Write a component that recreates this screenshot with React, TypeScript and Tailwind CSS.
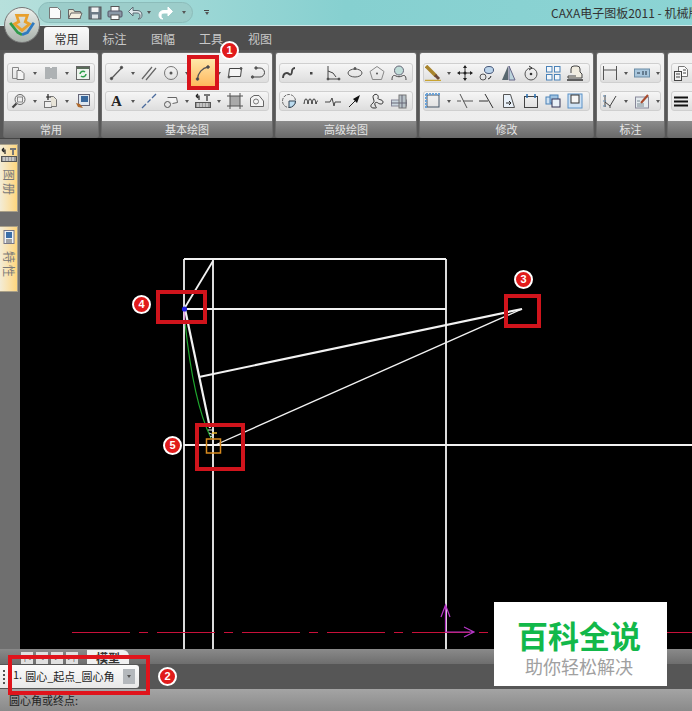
import type { ReactNode } from 'react';

const cjk = 'font-["Noto_Sans_CJK_SC",_"Noto_Sans",_sans-serif]';

function Ic({ children, w = 16 }: { children: ReactNode; w?: number }) {
  return (
    <svg width={w} height={16} viewBox={`0 0 ${w} 16`} fill="none" stroke="#555" strokeWidth="1" className="shrink-0">
      {children}
    </svg>
  );
}

function Caret() {
  return <span className="w-0 h-0 shrink-0 border-x-[2px] border-x-transparent border-t-[3px] border-t-[#555]" />;
}

// 工具栏图标
const icons: Record<string, ReactNode> = {
  copy: <><path d="M1.5 2.5h6v11h-6z" stroke="#888" /><path d="M6 5.5h4l3 3v6H6z" fill="#f4f4f4" stroke="#777" /></>,
  block: <path d="M2 2h5v1h2V2h5v12H9v-1H7v1H2z" fill="#aeb2b4" stroke="none" />,
  refresh: <><rect x="1.5" y="1.5" width="13" height="13" fill="#eef4ee" stroke="#666" /><rect x="2" y="2" width="12" height="2" fill="#5b6d5b" stroke="none" /><path d="M5 9a3 3 0 0 1 5-2M11 9a3 3 0 0 1-5 2" stroke="#2fa04a" strokeWidth="1.5" /></>,
  zoom: <><circle cx="9" cy="6.5" r="5" stroke="#666" fill="#eee" /><rect x="6.5" y="4" width="5" height="5" stroke="#888" /><path d="M5.5 10.5 1.5 14.5" stroke="#444" strokeWidth="2.2" /></>,
  paste: <><rect x="1.5" y="8.5" width="7" height="6" fill="#eee" stroke="#777" /><path d="M7.5 3.5h3l3 3v7h-5" fill="#e8e4d8" stroke="#777" /><path d="M5 1v6M3 4h5" stroke="#222" strokeWidth="1.2" /></>,
  brush: <><rect x="3.5" y="1.5" width="11" height="11" fill="#dde6f0" stroke="#667" /><rect x="6" y="3" width="7" height="6" fill="#39689c" stroke="none" /><path d="M1 10l4 1 3 4-5-1z" fill="#b06a2c" stroke="none" /></>,
  line: <><path d="M2.5 13.5 12.5 3" stroke="#555" strokeWidth="1.2" /><circle cx="2.5" cy="13.5" r="1.2" fill="#444" /><circle cx="12.5" cy="2.5" r="1.2" fill="#444" /></>,
  parallel: <path d="M1 14 11 2M5 15 15 3" stroke="#666" strokeWidth="1.2" />,
  circle: <><circle cx="8" cy="8" r="6.5" stroke="#777" /><circle cx="8" cy="8" r="1.5" fill="#555" stroke="none" /></>,
  arc: <><path d="M2.5 14C3 8 7 3 13 2" stroke="#555" strokeWidth="1.3" /><circle cx="2.5" cy="14" r="1.3" fill="#444" /><circle cx="13" cy="2" r="1.3" fill="#444" /></>,
  rect: <><path d="M2.5 4.5h12l-1 8h-12z" transform="translate(0 -1)" stroke="#444" fill="#f5f5f5" /><circle cx="14" cy="3.5" r="1" fill="#555" /><circle cx="2" cy="12" r="1" fill="#555" /></>,
  hook: <><path d="M8 3h3a4.500 4.500 0 0 1 0 9H5" stroke="#444" /><circle cx="7" cy="3" r="1.2" fill="#555" /><circle cx="3.500" cy="12" r="1.200" fill="#555" /></>,
  text: <text x="2" y="13" fontFamily="Liberation Serif, serif" fontWeight="700" fontSize="15" fill="#222" stroke="none">A</text>,
  center: <path d="M1 15 5 11M6.500 9.500 9.500 6.500M11 5 15 1" stroke="#4a6a9c" strokeWidth="1.300" />,
  car: <><path d="M4.500 4.500h9l1 5-5 1" stroke="#666" fill="#f4f4f4" /><circle cx="4.500" cy="11.500" r="3" stroke="#555" fill="#e5e5e5" /></>,
  table: <><rect x="0.500" y="9.500" width="15" height="5" fill="#999" stroke="#555" /><path d="M3 10v4M6 10v4M9 10v4M12 10v4" stroke="#eee" /><path d="M4 7V3h-3M1 3l2-2M1 3l2 2" stroke="#222" strokeWidth="1.200" /><path d="M9 2h6M12 2v6" stroke="#777" strokeWidth="2" /></>,
  hatch: <><rect x="3" y="3" width="10" height="10" fill="#a9a9a9" stroke="none" /><path d="M3 0v16M13 0v16M0 3h16M0 13h16" stroke="#555" /></>,
  shape: <><path d="M1.500 5 5 2.500h5L14.500 8v5.500h-13z" stroke="#666" fill="#f4f4f4" /><circle cx="7" cy="8.500" r="2.500" stroke="#777" /></>,
  spline: <path d="M2 13c0-5 4-6 6-4s3-1 3-3 2-3 3-3" stroke="#444" strokeWidth="1.800" />,
  dot: <rect x="7" y="7" width="2.500" height="2.500" fill="#444" stroke="none" />,
  axes: <><path d="M3 1v13h11M3 6l5 2 3 4" stroke="#444" /><circle cx="3" cy="14" r="1" fill="#333" /><circle cx="14" cy="14" r="1" fill="#333" /></>,
  ellipse: <><ellipse cx="8" cy="8" rx="7" ry="4" stroke="#555" /><circle cx="8" cy="3.500" r="1" fill="#555" /></>,
  pentagon: <><path d="M8 1.500 15 6.500 12.500 14.500h-9L1 6.500z" stroke="#888" /><circle cx="8" cy="8.500" r="1" fill="#555" stroke="none" /></>,
  ball: <><circle cx="8" cy="5.500" r="4.500" fill="#bfdcd8" stroke="#667" /><path d="M1 15c0-5 2-5 4-4 2 1 4 1 6 0 2-1 4-1 4 4" stroke="#444" /></>,
  sector: <><circle cx="8" cy="8" r="6.500" stroke="#666" strokeDasharray="3 1" /><path d="M8 8h6.500A6.500 6.500 0 0 1 8 14.500z" fill="#bcdcf0" stroke="#345" /></>,
  wave: <path d="M1 11c1-7 3-7 4 0 1-7 3-7 4 0 1-7 3-7 4 0 1-3 1-3 2-3" stroke="#333" />,
  pulse: <path d="M0 9h5l2-4 2 8 1-4h6" stroke="#444" />,
  arrow: <><path d="M2 14 9 7" stroke="#222" /><path d="M13 2 6 6l4 4z" fill="#111" stroke="none" /></>,
  blob: <path d="M5 2c3-2 5 1 4 3s5 1 5 4-4 2-5 1-4-1-3 2 3 3-1 3-4-3-1-5S2 4 5 2z" stroke="#333" />,
  wall: <><rect x="0.500" y="7" width="15" height="6" fill="#cad6de" stroke="#889" /><rect x="8" y="2" width="7" height="13" fill="#b8c2c8" stroke="#777" /><path d="M0 10h16M11 2v13" stroke="#667" /></>,
  pen: <><path d="M1 1 11 11" stroke="#a8842c" strokeWidth="3.500" /><path d="M10 10l4 4" stroke="#6b4a3a" strokeWidth="3" /><path d="M0 15.500h16" stroke="#c9a432" strokeWidth="1.500" /></>,
  move: <><path d="M8 1v14M1 8h14" stroke="#333" /><path d="M8 0l2 3H6zM8 16l2-3H6zM0 8l3 2V6zM16 8l-3 2V6z" fill="#222" stroke="none" /><circle cx="8" cy="8" r="1.500" fill="#222" stroke="none" /></>,
  rings: <><circle cx="4" cy="12" r="3" stroke="#555" /><ellipse cx="10" cy="5" rx="4.500" ry="3.500" fill="#bcd4ea" stroke="#457" /><path d="M9 14a4 4 0 0 0 3-3" stroke="#222" /></>,
  mirror: <><path d="M7 1v14H1z" fill="#57676f" stroke="none" /><path d="M8 1v14h6z" fill="#bcd4dc" stroke="#668" /></>,
  rotate: <><circle cx="8" cy="9" r="6" stroke="#555" /><circle cx="8" cy="9" r="1.300" fill="#333" stroke="none" /><path d="M6 1l3 2-3 2" stroke="#333" /></>,
  grid: <><rect x="1.500" y="1.500" width="5.500" height="5.500" stroke="#4a82b8" fill="#f2f6fa" /><rect x="9.500" y="1.500" width="5.500" height="5.500" stroke="#4a82b8" fill="#f2f6fa" /><rect x="1.500" y="9.500" width="5.500" height="5.500" stroke="#4a82b8" fill="#f2f6fa" /><rect x="9.500" y="9.500" width="5.500" height="5.500" stroke="#4a82b8" fill="#f2f6fa" /></>,
  stamp: <><path d="M4 8V4a3 3 0 0 1 3-3h3a3 3 0 0 1 3 3v3l2 2v4H1v-2h8" stroke="#444" fill="#f0ece0" /><path d="M0 15h16" stroke="#333" strokeWidth="1.500" /></>,
  frame: <><rect x="2" y="2" width="12" height="12" stroke="#456" /><path d="M1 1h14M1 1v14" stroke="#6aa2d8" strokeWidth="2" strokeDasharray="2 1" /></>,
  trim: <path d="M0 8h4M6 8h10M3 1l7 14" stroke="#555" strokeDasharray="0" />,
  extend: <path d="M0 8h9M6 1l8 14" stroke="#333" />,
  doc: <><path d="M2.500 1.500h7l4 13h-11z" stroke="#555" fill="#e9f1f9" /><path d="M5 10h5M8 8l2 2-2 2" stroke="#222" /></>,
  corners: <><rect x="1.500" y="3.500" width="13" height="11" stroke="#444" /><path d="M4 1v4M12 1v4" stroke="#2a6fb0" strokeWidth="1.500" /></>,
  stack: <><rect x="1" y="4" width="6" height="7" fill="#d0e2f2" stroke="#4a82b8" /><rect x="5" y="2" width="8" height="8" fill="#9fc2e0" stroke="#4a82b8" /><rect x="7" y="6" width="8" height="8" fill="#e8f0f8" stroke="#335" /></>,
  panel: <><rect x="1" y="1" width="14" height="14" fill="#cfe2f4" stroke="#5a92c8" /><rect x="4" y="2" width="8" height="8" fill="#f6f6f6" stroke="#333" /></>,
  dim: <path d="M1.500 1v14M14.500 1v14M1.500 5h13" stroke="#555" />,
  scale: <><rect x="0.500" y="4" width="15" height="8" fill="#a9c6dc" stroke="#6a8ca6" /><path d="M3 8h3M9 6v4M12 6v4" stroke="#234" /></>,
  tree: <><path d="M3 2v12M3 9l5 4 6-10M8 13v2" stroke="#444" /><path d="M1 3h4M1 8h4M1 13h4" stroke="#4a82b8" strokeDasharray="1 1" /></>,
  note: <><rect x="1.500" y="4" width="13" height="11" fill="#e4eaee" stroke="#889" /><path d="M7 10 14 2" stroke="#a84a2c" strokeWidth="2" /><path d="M3 8h3M3 11h7M3 13h7" stroke="#7a8a92" /></>,
  sheet: <><path d="M5.500 1.500h6l3 3v7h-9z" stroke="#777" fill="#fafafa" /><rect x="1.500" y="6.500" width="7" height="9" fill="#f0f0f0" stroke="#444" /><path d="M3 9h4M3 12h4M10 5h3M10 8h3" stroke="#444" /></>,
  weight: <path d="M1 4.500h14M1 8.500h14M1 12.500h14" stroke="#111" strokeWidth="2" />,
};

type Item = string | null;

// null 表示下拉小箭头
function Row({ items, gap = 'gap-[6px]', pad = 'pl-[3px]' }: { items: Item[]; gap?: string; pad?: string }) {
  return (
    <div className={`h-5 flex items-center ${gap} ${pad} bg-gradient-to-b from-[#f6f6f6] to-[#dedede] border border-[#cfcfcf] rounded-[3px]`}>
      {items.map((it, i) => (it ? <Ic key={i}>{icons[it]}</Ic> : <Caret key={i} />))}
    </div>
  );
}

function Group({ w, title, children }: { w: string; title?: string; children: ReactNode }) {
  return (
    <div className={`${w} shrink-0 h-[84px] flex flex-col bg-gradient-to-b from-[#f2f2f2] to-[#ececec] rounded-[2px] shadow-[0_0_0_1px_#6a6a6a]`}>
      <div className="flex-1 px-[3px] pt-[10px] flex flex-col gap-2">{children}</div>
      <div className={`h-4 bg-gradient-to-b from-[#8c8c8c] to-[#6b6b6b] text-center text-[11px] leading-4 text-[#e6e6e6] ${cjk}`}>{title}</div>
    </div>
  );
}

function Badge({ n, className }: { n: number; className: string }) {
  return (
    <div className={`absolute w-[19px] h-[19px] rounded-full bg-[#e11b1b] border-2 border-white text-white text-[11px] leading-[15px] font-bold text-center font-["Liberation_Sans",_sans-serif] ${className}`}>
      {n}
    </div>
  );
}

function SideTab({ label, children, h }: { label: string; children: ReactNode; h: string }) {
  return (
    <div className={`${h} w-[18px] flex flex-col items-center pt-[2px] gap-[6px] bg-gradient-to-r from-[#f3ecd6] to-[#ffd67c] border-y border-r border-[#a89f88]`}>
      {children}
      <span className={`[writing-mode:vertical-rl] [text-orientation:sideways] text-[12px] tracking-[2px] text-[#7a7a7a] ${cjk}`}>{label}</span>
    </div>
  );
}

export default function App() {
  return (
    <div className="relative w-[692px] h-[711px] overflow-hidden flex flex-col bg-[#6f6f6f]">
      {/* 标题栏 */}
      <div className="h-[26px] shrink-0 flex items-center bg-gradient-to-r from-[#b7e0dc] via-[#86d0d0] to-[#8cd4d4] border-b border-[#cfe8e8]">
        <div className="ml-[38px] w-[155px] h-[21px] rounded-full bg-[#9ccdca] border border-[#8cbcba] flex items-center gap-[4px] pl-[8px]">
          <Ic><path d="M2.500 2.500h8l3 3v8h-11z" fill="#fafafa" stroke="#777" /></Ic>
          <Ic><path d="M1.500 4.500h5l1 2h6v7h-12z" fill="#e8e4d0" stroke="#666" /><path d="M4 8h11l-2 5.500H1.500z" fill="#f4f0e0" stroke="#666" /></Ic>
          <Ic><rect x="2" y="2" width="12" height="12" fill="#6d7a86" stroke="#555" /><rect x="4.500" y="2.500" width="7" height="4.500" fill="#f2f2f2" stroke="none" /><rect x="5" y="9.500" width="6" height="4" fill="#dfe4e8" stroke="none" /></Ic>
          <Ic><rect x="4" y="1.500" width="8" height="5" fill="#fafafa" stroke="#555" /><rect x="1" y="6" width="14" height="6" rx="1" fill="#8a98a6" stroke="#556" /><rect x="4" y="10" width="8" height="4.500" fill="#fafafa" stroke="#555" /></Ic>
          <Ic><path d="M6 2 1.500 6.500 6 11V8h4c2 0 3 1 3 3s-1 2-2 3c3 0 4-2 4-4 0-3-2-4.500-5-4.500H6z" fill="#dfe8ec" stroke="#5b6b72" /></Ic>
          <Caret />
          <span className="ml-[3px] flex"><Ic><path d="M10 2l4.500 4.500L10 11V8H6c-2 0-3 1-3 3s1 2 2 3c-3 0-4-2-4-4 0-3 2-4.500 5-4.500h4z" fill="#fff" stroke="#fff" /></Ic></span>
          <span className="ml-[4px] flex"><Caret /></span>
        </div>
        <span className="ml-[11px] flex flex-col items-center gap-[1px]">
          <span className="w-[5px] h-[1px] bg-[#444]" />
          <Caret />
        </span>
        <span className={`ml-auto w-[141px] shrink-0 whitespace-nowrap overflow-hidden text-[12px] text-[#333] ${cjk}`}>CAXA电子图板2011 - 机械版</span>
      </div>

      {/* 选项卡 */}
      <div className={`h-[24px] shrink-0 bg-[#4e4e4e] flex items-end pl-[44px] text-[12px] ${cjk}`}>
        <div className="w-[45px] h-[23px] rounded-t-[3px] bg-gradient-to-b from-[#fafafa] to-[#e6e6e6] text-[#333] text-center leading-[23px]">常用</div>
        <div className="w-[51px] h-[23px] text-center leading-[23px] text-[#c8c8c8]">标注</div>
        <div className="w-[46px] h-[23px] text-center leading-[23px] text-[#c8c8c8]">图幅</div>
        <div className="w-[50px] h-[23px] text-center leading-[23px] text-[#c8c8c8]">工具</div>
        <div className="w-[48px] h-[23px] text-center leading-[23px] text-[#c8c8c8]">视图</div>
      </div>

      {/* 功能区 */}
      <div className="h-[88px] shrink-0 bg-[#575757] flex gap-1 pl-1 pt-[3px] overflow-hidden">
        <Group w="w-[94px]" title="常用">
          <Row items={['copy', null, 'block', null, 'refresh']} />
          <Row items={['zoom', null, 'paste', null, 'brush']} />
        </Group>
        <Group w="w-[170px]" title="基本绘图">
          <Row items={['line', null, 'parallel', 'circle', null, 'arc', null, 'rect', 'hook']} />
          <Row items={['text', null, 'center', 'car', null, 'table', null, 'hatch', 'shape']} />
        </Group>
        <Group w="w-[140px]" title="高级绘图">
          <Row items={['spline', 'dot', 'axes', 'ellipse', 'pentagon', 'ball']} pad="pl-[1px]" />
          <Row items={['sector', 'wave', 'pulse', 'arrow', 'blob', 'wall']} pad="pl-[1px]" />
        </Group>
        <Group w="w-[173px]" title="修改">
          <Row items={['pen', null, 'move', 'rings', 'mirror', 'rotate', 'grid', 'stamp']} pad="pl-[1px]" />
          <Row items={['frame', null, 'trim', 'extend', 'doc', 'corners', 'stack', 'panel']} pad="pl-[1px]" />
        </Group>
        <Group w="w-[67px]" title="标注">
          <Row items={['dim', null, 'scale', null]} pad="pl-[1px]" />
          <Row items={['tree', null, 'note', null]} pad="pl-[1px]" />
        </Group>
        <Group w="w-[60px]">
          <Row items={['sheet']} pad="pl-[1px]" />
          <Row items={['weight']} pad="pl-[1px]" />
        </Group>
      </div>

      {/* 绘图区 */}
      <div className="h-[511px] shrink-0 flex bg-[#6f6f6f]">
        <div className="w-5 shrink-0 flex flex-col gap-[14px] pt-[5px] border-t border-[#444]">
          <SideTab label="图册" h="h-[68px]"><Ic>{icons.table}</Ic></SideTab>
          <SideTab label="特性" h="h-[66px]">
            <Ic><rect x="3" y="1.500" width="10" height="13" fill="#eef2f6" stroke="#778" /><rect x="5" y="3" width="6" height="6" fill="#3a6ea8" stroke="none" /><path d="M5 11h6M5 13h6" stroke="#555" /></Ic>
          </SideTab>
        </div>
        <svg viewBox="20 138 672 511" className="flex-1 h-full block bg-black" fill="none">
          <g stroke="#f2f2f2" strokeWidth="1.800">
            <path d="M184 259V649M213 259V649M446 259V649M184 259H446M184 309H446M184 445H692" />
            <path d="M184 309 213 261" />
            <path d="M185 309 210 428" strokeWidth="2.200" />
            <path d="M199 377 522 309" strokeWidth="2.200" />
            <path d="M213 446 522 309" strokeWidth="1.300" />
          </g>
          <path d="M185 322C190 370 198 412 211 438" stroke="#1fa82e" strokeWidth="1.200" />
          <path d="M184.500 310V325" stroke="#e79be0" strokeWidth="1.500" />
          <circle cx="184.500" cy="309" r="2.600" fill="#2020e0" />
          <path d="M208 430h6M209 433l5 2-4 2" stroke="#e8e8e8" />
          <path d="M212 433h5" stroke="#e5b52c" strokeWidth="1.500" />
          <rect x="206.500" y="439" width="14" height="14" stroke="#d88a1e" strokeWidth="1.500" />
          <path d="M72 632.500H692" stroke="#c8103a" strokeWidth="1.200" strokeDasharray="58 9 9 9" />
          <g stroke="#b838c8" strokeWidth="1.200">
            <path d="M445.500 632V606M441 617l4.500-12 4.500 12M445 632H474M464 627l10 5-10 5" />
          </g>
        </svg>
      </div>

      {/* 底部 */}
      <div className="h-[15px] shrink-0 bg-gradient-to-b from-[#8a8a8a] to-[#6e6e6e] flex items-end pl-[21px] gap-[3px]">
        {['|◂', '◂', '▸', '▸|'].map((t) => (
          <div key={t} className="w-3 h-3 bg-[#e0e0e0] text-[7px] leading-3 text-center text-[#444]">{t}</div>
        ))}
        <div className={`ml-[6px] w-[42px] h-[14px] bg-[#f0f0f0] rounded-tr-[6px] text-[12px] font-bold leading-[15px] text-center text-[#333] ${cjk}`}>模型</div>
      </div>
      <div className="h-[25px] shrink-0 bg-[#565656] flex items-center">
        <div className={`w-[139px] h-[23px] rounded-r-[3px] bg-gradient-to-b from-[#fbfbfb] to-[#e8e8e8] flex items-center pl-[3px] text-[11px] text-[#222] ${cjk}`}>
          <span className="w-[2px] h-[14px] border-l-2 border-dotted border-[#555] mr-[8px]" />
          <span className="mr-[3px] -mt-1">1.</span>
          <span className="whitespace-nowrap">圆心_起点_圆心角</span>
          <span className="ml-[9px] w-3 h-[15px] bg-[#b4b8bc] flex items-center justify-center"><Caret /></span>
        </div>
      </div>
      <div className={`flex-1 bg-gradient-to-b from-[#a4a4a4] to-[#8a8a8a] pl-[9px] pt-[3px] text-[11px] leading-4 text-[#222] ${cjk}`}>圆心角或终点:</div>

      {/* 教程标注 */}
      <div className="absolute left-[187px] top-[55px] w-[32px] h-[35px] border-[4px] border-[#d8141c] bg-gradient-to-b from-[#ffe7a8] to-[#ffb85c] flex items-center justify-center">
        <Ic>{icons.arc}</Ic>
      </div>
      <div className="absolute left-[156px] top-[290px] w-[51px] h-[34px] border-[4px] border-[#d0141c]" />
      <div className="absolute left-[195px] top-[423px] w-[50px] h-[48px] border-[4px] border-[#d0141c]" />
      <div className="absolute left-[504px] top-[294px] w-[37px] h-[34px] border-[4px] border-[#d0141c]" />
      <div className="absolute left-[8px] top-[655px] w-[142px] h-[40px] border-[4px] border-[#e0141c]" />
      <Badge n={1} className="left-[220px] top-[41px]" />
      <Badge n={2} className="left-[158px] top-[667px]" />
      <Badge n={3} className="left-[514px] top-[270px]" />
      <Badge n={4} className="left-[132px] top-[295px]" />
      <Badge n={5} className="left-[163px] top-[436px]" />

      {/* 水印 */}
      <div className={`absolute left-[494px] top-[602px] w-[173px] h-[84px] bg-white flex flex-col items-center pt-[15px] pr-[3px] ${cjk}`}>
        <div className="text-[31px] leading-[36px] font-bold text-[#12b84a]">百科全说</div>
        <div className="mt-[2px] text-[18px] leading-[22px] text-[#a0a0a0]">助你轻松解决</div>
      </div>

      {/* 徽标 */}
      <div className="absolute left-[4px] top-[7px] w-[36px] h-[36px] rounded-full bg-gradient-to-b from-[#eef2ee] to-[#a8b0aa] border border-[#777] flex items-center justify-center">
        <svg width="28" height="28" viewBox="0 0 26 26" fill="none" strokeWidth="2.500">
          <path d="M8 4h10l-2 6 4 2-7 6-7-6 4-2z" stroke="#e8a02c" />
          <path d="M2 11l7 9 4 2" stroke="#2f9a4a" />
          <path d="M24 11l-6 9-5 2" stroke="#2f7ac0" />
        </svg>
      </div>
    </div>
  );
}
